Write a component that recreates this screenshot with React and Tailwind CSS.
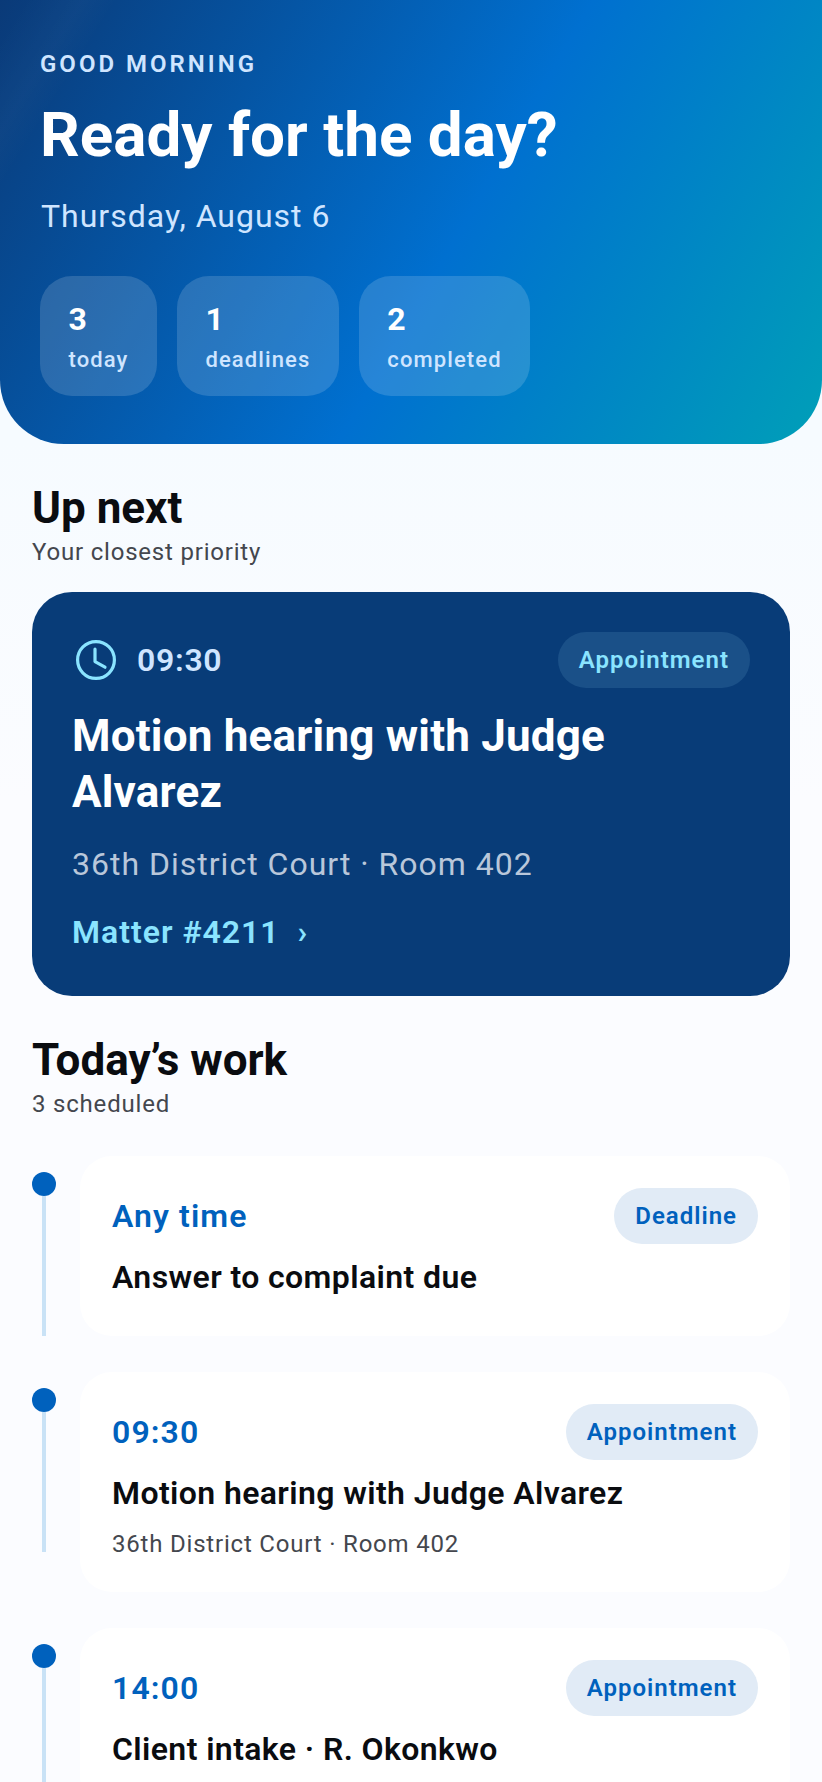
// App.jsx
// Daily agenda screen: greeting hero, next-up card and today's timeline
import React from "react";

const STATS = [
  { value: "3", label: "today" },
  { value: "1", label: "deadlines" },
  { value: "2", label: "completed" },
];

const WORK = [
  { time: "Any time", kind: "Deadline", title: "Answer to complaint due" },
  { time: "09:30", kind: "Appointment", title: "Motion hearing with Judge Alvarez", place: "36th District Court · Room 402" },
  { time: "14:00", kind: "Appointment", title: "Client intake · R. Okonkwo" },
];

function ClockIcon() {
  return (
    <svg width="48" height="48" viewBox="0 0 24 24" fill="none" stroke="#8ae4ff" strokeWidth="1.6" strokeLinecap="round" strokeLinejoin="round">
      <circle cx="12" cy="12" r="9.2" />
      <path d="M11.5 6.6V12.8L16.5 15.6" />
    </svg>
  );
}

function SectionHead({ title, sub }) {
  return (
    <div>
      <h2 className="text-[44px] leading-[52px] font-bold text-[#0a0c10]">{title}</h2>
      <p className="mt-1 text-[24px] leading-[28px] tracking-[0.8px] text-[#44474e]">{sub}</p>
    </div>
  );
}

function WorkRow({ item }) {
  return (
    <div className="flex gap-6">
      <div className="flex flex-col items-center w-6 pt-4 shrink-0">
        <div className="w-6 h-6 rounded-full bg-[#0061bd]" />
        <div className="w-1 h-[140px] bg-[#c9e2f6]" />
      </div>
      <div className="flex-1 bg-white rounded-[32px] p-8">
        <div className="flex items-center justify-between">
          <span className="text-[32px] font-semibold tracking-[1.1px] text-[#0061bd]">{item.time}</span>
          <span className="h-14 px-[21px] flex items-center rounded-full bg-[#e1ebf6] text-[24px] font-semibold tracking-[1px] text-[#0061bd]">{item.kind}</span>
        </div>
        <p className="mt-[13px] text-[32px] leading-[40px] font-semibold tracking-[0.4px] text-[#0a0c10]">{item.title}</p>
        {item.place && <p className="mt-[15px] text-[24px] leading-[32px] tracking-[0.8px] text-[#44474e]">{item.place}</p>}
      </div>
    </div>
  );
}

export default function App() {
  return (
    <div className="h-[1782px] overflow-hidden bg-[linear-gradient(180deg,#f6fbff_440px,#fbfcff_800px)] font-['Roboto',sans-serif]">
      {/* Hero */}
      <div className="h-[444px] rounded-b-[64px] px-10 pt-[48px] bg-[linear-gradient(122deg,transparent_20px,rgba(255,255,255,0.025)_70px,transparent_100px),linear-gradient(120deg,#0a3a78_0%,#0070d0_55%,#009fb8_100%)]">
        <p className="text-[24px] leading-[32px] font-semibold tracking-[3px] text-[#cfe5ff]">GOOD MORNING</p>
        <h1 className="mt-[21px] text-[62px] leading-[68px] font-bold text-white">Ready for the day?</h1>
        <p className="mt-[27px] ml-px text-[32px] leading-[40px] tracking-[1px] text-[#cfe5ff]">Thursday, August 6</p>
        <div className="flex gap-5 mt-10">
          {STATS.map((s) => (
            <div key={s.label} className="h-[120px] rounded-[32px] bg-white/15 px-[28.5px] pt-[25px]">
              <p className="text-[32px] leading-[36px] font-bold text-white">{s.value}</p>
              <p className="mt-[9px] text-[22px] leading-[28px] font-medium tracking-[1.1px] text-[#cfe5ff]">{s.label}</p>
            </div>
          ))}
        </div>
      </div>

      <div className="px-8 pt-[38px]">
        <SectionHead title="Up next" sub="Your closest priority" />

        {/* Next appointment */}
        <div className="mt-[26px] h-[404px] rounded-[40px] bg-[#083c78] px-10 pt-10">
          <div className="flex items-center justify-between">
            <div className="flex items-center gap-[17px]">
              <ClockIcon />
              <span className="text-[32px] font-semibold tracking-[0.7px] text-[#cfe5ff]">09:30</span>
            </div>
            <span className="h-14 px-[21px] flex items-center rounded-full bg-[#1a5088] text-[24px] font-semibold tracking-[1px] text-[#8ae4ff]">Appointment</span>
          </div>
          <h3 className="mt-5 text-[44px] leading-[56px] font-bold tracking-[0.2px] text-white">Motion hearing with Judge Alvarez</h3>
          <p className="mt-6 text-[32px] leading-[40px] tracking-[1px] text-[#b9c7da]">36th District Court · Room 402</p>
          <p className="mt-7 text-[32px] leading-[40px] font-semibold tracking-[1px] text-[#8ae4ff]">
            Matter #4211 <span className="ml-[9px]">›</span>
          </p>
        </div>

        <div className="mt-[38px]">
          <SectionHead title="Today’s work" sub="3 scheduled" />
        </div>

        {/* Timeline */}
        <div className="mt-[38px] flex flex-col gap-9">
          {WORK.map((item) => (
            <WorkRow key={item.time} item={item} />
          ))}
        </div>
      </div>
    </div>
  );
}
